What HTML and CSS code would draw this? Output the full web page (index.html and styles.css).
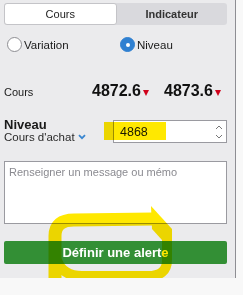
FILE: index.html
```html
<!DOCTYPE html>
<html lang="fr">
<head>
    <meta charset="UTF-8">
    <title>Alerte</title>
    <link rel="stylesheet" href="styles.css">
</head>
<body>
    <div class="panel">
        <div class="tabs">
            <div class="tab active">Cours</div>
            <div class="tab">Indicateur</div>
        </div>

        <div class="radios">
            <label class="radio"><span class="dot"></span>Variation</label>
            <label class="radio checked"><span class="dot"></span>Niveau</label>
        </div>

        <div class="prices">
            <span class="label">Cours</span>
            <span class="price">4872.6<i class="down"></i></span>
            <span class="price">4873.6<i class="down"></i></span>
        </div>

        <div class="level">
            <div class="labels">
                <b>Niveau</b>
                <span class="select">Cours d'achat
                    <svg width="8" height="6" viewBox="0 0 8 6"><path d="M1 1.2 L4 4.2 L7 1.2" fill="none" stroke="#3a86d0" stroke-width="1.8"/></svg>
                </span>
            </div>
            <div class="field">
                <span class="value">4868</span>
                <svg class="spin" width="8" height="16" viewBox="0 0 8 16">
                    <path d="M1 5 L4 2 L7 5 M1 11 L4 14 L7 11" fill="none" stroke="#777" stroke-width="1"/>
                </svg>
                <span class="marker"></span>
            </div>
        </div>

        <div class="memo">Renseigner un message ou mémo</div>

        <button class="submit">Définir une alerte</button>

        <!-- surlignage à la main -->
        <svg class="scribble" width="235" height="278" viewBox="0 0 235 278">
            <path d="M55 290 L55 236 Q55 220 74 220 L153 219" fill="none" stroke="#ffe800" stroke-width="13" stroke-linecap="round"/>
            <path d="M167 234 L167 260 Q167 276 148 276 L82 276 Q62 276 57 260" fill="none" stroke="#ffe800" stroke-width="10"/>
            <polygon points="151,206 172,229 172,240 162,240 152,229" fill="#ffe800"/>
        </svg>
    </div>
</body>
</html>
```

FILE: styles.css
```css
body {
    margin: 0;
    background: #f8f8f8;
    font-family: "Liberation Sans", Arial, sans-serif;
    color: #1a1a1a;
}

.panel {
    position: relative;
    width: 231px;
    height: 275px;
    padding: 3px 0 0 4px;
    background: #ebebed;
    border-right: 1px solid #8e8e93;
    overflow: hidden;
}

.tabs {
    display: flex;
    width: 223px;
    height: 22px;
    background: #d9d9dd;
    border-radius: 3px;
}

.tab {
    flex: 1;
    display: flex;
    align-items: center;
    justify-content: center;
    font-size: 11px;
    font-weight: bold;
    color: #333;
}

.tab.active {
    background: #fff;
    border: 1px solid #c4c4c8;
    border-radius: 3px;
    font-weight: normal;
    color: #222;
}

.radios {
    display: grid;
    grid-template-columns: 113px auto;
    margin-top: 12px;
    padding-left: 3px;
}

.radio {
    display: flex;
    align-items: center;
    gap: 2px;
    font-size: 11.5px;
    height: 15px;
}

.dot {
    width: 13px;
    height: 13px;
    border: 1px solid #8e8e93;
    border-radius: 50%;
    background: #fff;
    position: relative;
}

.radio.checked .dot {
    background: #2f80d1;
    border-color: #2f80d1;
}

.radio.checked .dot::after {
    content: "";
    position: absolute;
    left: 4.5px;
    top: 4.5px;
    width: 4px;
    height: 4px;
    border-radius: 50%;
    background: #fff;
}

.prices {
    display: grid;
    grid-template-columns: 88px 72px auto;
    align-items: baseline;
    margin-top: 30px;
    height: 20px;
}

.label {
    font-size: 11px;
}

.price {
    font-size: 16px;
    font-weight: bold;
    color: #111;
}

.down {
    display: inline-block;
    margin-left: 2px;
    border-left: 3.5px solid transparent;
    border-right: 3.5px solid transparent;
    border-top: 6px solid #d0021b;
}

.level {
    display: flex;
    justify-content: space-between;
    width: 223px;
    height: 23px;
    margin-top: 18px;
}

.labels {
    display: flex;
    flex-direction: column;
    margin-top: -2px;
}

.labels b {
    font-size: 13px;
    line-height: 13px;
}

.select {
    font-size: 11.5px;
    line-height: 13px;
    color: #2a2a2a;
}

.select svg {
    vertical-align: 1px;
}

.field {
    position: relative;
    display: flex;
    align-items: center;
    justify-content: space-between;
    width: 103px;
    height: 21px;
    padding: 0 3px 0 6px;
    background: #fff;
    border: 1px solid #9a9aa0;
}

.value {
    font-size: 12.5px;
}

.marker {
    position: absolute;
    left: -10px;
    top: 1px;
    width: 62px;
    height: 18px;
    background: #ffe800;
    mix-blend-mode: multiply;
}

.memo {
    width: 213px;
    height: 53px;
    margin-top: 18px;
    padding: 4px 4px;
    background: #fff;
    border: 1px solid #9a9aa0;
    font-size: 11px;
    color: #8a8a90;
}

.submit {
    display: block;
    width: 223px;
    height: 23px;
    margin-top: 17px;
    border: 0;
    border-radius: 2px;
    background: #338f35;
    color: #fff;
    font-family: inherit;
    font-size: 13px;
    font-weight: bold;
}

.scribble {
    position: absolute;
    left: 0;
    top: 0;
    mix-blend-mode: multiply;
}
```
